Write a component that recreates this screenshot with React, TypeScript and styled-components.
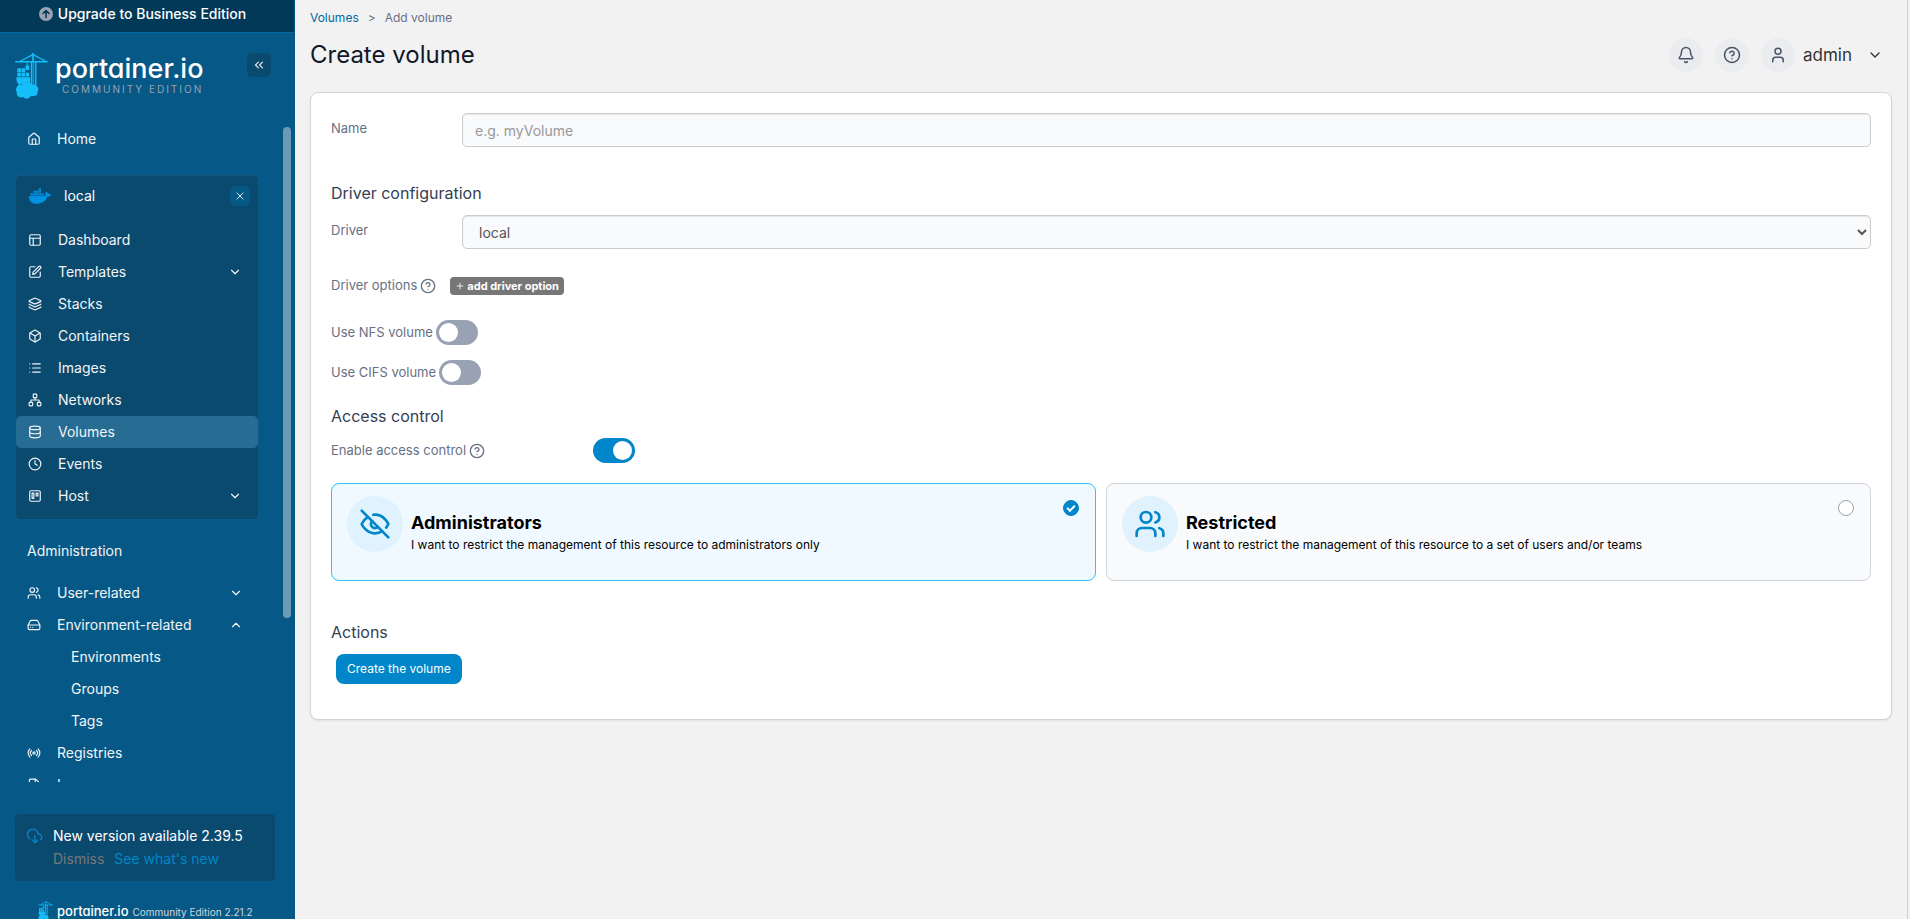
import React from 'react';
import styled, { createGlobalStyle } from 'styled-components';
import {
  Bell, Box, ChevronDown, ChevronsLeft, ChevronUp, CircleQuestionMark, Clock, Database,
  FileText, HardDrive, House, Layers, List, Network, PanelsTopLeft, Plus, Radio,
  SquarePen, User, Users, X,
} from 'lucide-react';
import { FaDocker } from 'react-icons/fa';

const GlobalStyle = createGlobalStyle`
  *, *::before, *::after { box-sizing: border-box; }
  body {
    margin: 0;
    background: #f2f2f2;
    font-family: Inter, "Liberation Sans", sans-serif;
    font-size: 14px;
    line-height: 20px;
    color: #344054;
  }
  a { text-decoration: none; color: inherit; }
  button, input, select { font-family: inherit; }
  h1, h2, h3, p, ul { margin: 0; padding: 0; }
  ul { list-style: none; }
`;

const Shell = styled.div`
  display: flex;
  height: 100vh;
  padding-right: 2px;
`;

/* ---------- Sidebar ---------- */

const Sidebar = styled.aside`
  flex: 0 0 295px;
  display: flex;
  flex-direction: column;
  height: 100vh;
  overflow: hidden;
  background: #065986;
  color: #f2f4f7;
`;

const UpgradeButton = styled.button`
  flex: 0 0 33px;
  display: flex;
  align-items: center;
  justify-content: center;
  gap: 5px;
  margin-right: 1px;
  padding: 0 9px 5px 0;
  border: 0;
  border-bottom: 1px solid #026aa2;
  background: #033958;
  color: #fff;
  font-size: 14px;
  font-weight: 500;
`;

const Brand = styled.div`
  flex: 0 0 90px;
  display: flex;
  align-items: flex-start;
  justify-content: space-between;
  padding: 20px 24px 0 15px;
`;

const Logo = styled.a`
  display: flex;
  align-items: flex-start;
  gap: 7px;
`;

const WordMark = styled.span<{ $size: number }>`
  display: block;
  color: #fff;
  font-size: ${(p) => p.$size}px;
  line-height: ${(p) => p.$size + 4}px;
  font-weight: 500;
  font-feature-settings: "cv11";
`;

const EditionMark = styled.span`
  display: block;
  padding-left: 7px;
  color: #98a2b3;
  font-size: 10px;
  line-height: 10px;
  letter-spacing: 2px;
  white-space: nowrap;
`;

const SquareButton = styled.button<{ $size: number; $bg: string }>`
  display: flex;
  align-items: center;
  justify-content: center;
  width: ${(p) => p.$size}px;
  height: ${(p) => p.$size}px;
  padding: 0;
  border: 0;
  border-radius: 5px;
  background: ${(p) => p.$bg};
  color: #e4e7ec;
`;

const MenuArea = styled.div`
  flex: 1 1 0;
  min-height: 0;
  display: flex;
  overflow: hidden;
`;

const Menu = styled.nav`
  flex: 1;
  padding-left: 16px;
  padding-right: 24px;
`;

const ScrollTrack = styled.div`
  flex: 0 0 8px;
  margin: 4px 4px 0 0;
`;

const ScrollThumb = styled.div`
  height: 75%;
  border-radius: 4px;
  background: #6a9bb6;
`;

const ItemLink = styled.a<{ $active?: boolean; $inset?: number }>`
  display: flex;
  align-items: center;
  height: 32px;
  padding: 0 16px 0 ${(p) => p.$inset ?? 12}px;
  border-radius: 5px;
  background: ${(p) => (p.$active ? '#276c93' : 'transparent')};
  color: #f2f4f7;
  font-size: 14px;

  > span { flex: 1; }
  > svg:first-child { flex: none; margin-right: 16px; }
`;

const EnvironmentBox = styled.section`
  margin: 20px 0 0;
  padding: 0 0 7px;
  border: 1px dotted #0e6c9f;
  border-width: 1px 1px 1px 0;
  border-radius: 5px;
  background: #0b4a6f;
`;

const EnvironmentHead = styled.div`
  display: flex;
  align-items: center;
  height: 48px;
  padding: 0 8px 8px 13px;
  gap: 13px;

  > span { flex: 1; color: #fff; }
`;

const MenuTitle = styled.h3`
  margin: 20px 0 15px;
  padding-left: 11px;
  font-size: 14px;
  line-height: 22px;
  font-weight: 400;
`;

const UpdateBox = styled.div`
  display: flex;
  gap: 10px;
  margin: 32px 20px 0 15px;
  padding: 11px 12px 11px 12px;
  border-radius: 4px;
  background: #0b4a6f;

  > svg { margin-top: 3px; }
`;

const UpdateText = styled.p`
  color: #fff;
  line-height: 22px;
`;

const UpdateActions = styled.div`
  display: flex;
  gap: 10px;
  line-height: 23px;
`;

const DismissButton = styled.button`
  padding: 0;
  border: 0;
  background: none;
  color: #777;
  font-size: 14px;
  line-height: 23px;
`;

const NewsLink = styled.a`
  color: #0086c9;
`;

const SideFooter = styled.footer`
  flex: 0 0 38px;
  display: flex;
  align-items: center;
  padding: 23px 0 0 38px;
  overflow: hidden;
  gap: 4px;
`;

const Version = styled.span`
  font-size: 10px;
  line-height: 16px;
  color: #d0d5dd;
  white-space: nowrap;
`;

/* ---------- Main ---------- */

const Main = styled.main`
  flex: 1;
  min-width: 0;
  padding: 10px 15px;
  border-right: 1px solid #d0d0d0;
  overflow: auto;
`;

const Breadcrumbs = styled.nav`
  display: flex;
  gap: 9px;
  font-size: 12px;
  line-height: 16px;
  color: #667085;

  a { color: #026aa2; }
`;

const PageHead = styled.header`
  display: flex;
  align-items: center;
  justify-content: space-between;
  height: 34px;
  margin: 12px 0 20px;
`;

const PageTitle = styled.h1`
  font-size: 24px;
  line-height: 32px;
  font-weight: 400;
  color: #101828;
`;

const HeadTools = styled.div`
  display: flex;
  align-items: center;
  gap: 12px;
  padding-right: 9px;
`;

const RoundButton = styled.button`
  display: flex;
  align-items: center;
  justify-content: center;
  width: 34px;
  height: 34px;
  padding: 0;
  border: 0;
  border-radius: 50%;
  background: #eaecf0;
  color: #475467;
`;

const UserButton = styled.button`
  display: flex;
  align-items: center;
  gap: 8px;
  padding: 0;
  border: 0;
  background: none;
  color: #333;
  font-size: 17px;

  > svg { margin-left: 7px; }
`;

const Avatar = styled.span`
  display: flex;
  align-items: center;
  justify-content: center;
  width: 34px;
  height: 34px;
  border-radius: 50%;
  background: #eaecf0;
  color: #475467;
`;

const Card = styled.form`
  padding: 20px 20px 35px;
  border: 1px solid #d0d5dd;
  border-radius: 8px;
  background: #fff;
  box-shadow: 0 1px 2px rgba(16, 24, 40, 0.08);
`;

const FieldRow = styled.div`
  display: flex;
  align-items: flex-start;
  height: 34px;
`;

const Label = styled.label<{ $width?: number }>`
  flex: none;
  width: ${(p) => (p.$width ? `${p.$width}px` : 'auto')};
  font-size: 13px;
  line-height: 16px;
  color: #667085;
`;

const FieldLabel = styled(Label)`
  padding-top: 7px;
`;

const fieldLook = `
  flex: 1;
  height: 34px;
  border: 1px solid #ccc;
  border-radius: 5px;
  background: #f9fafb;
  box-shadow: inset 0 1px 1px rgba(0, 0, 0, 0.08);
  font-size: 14px;
  color: #555;
`;

const TextInput = styled.input`
  ${fieldLook}
  padding: 0 12px;
  &::placeholder { color: #999; opacity: 1; }
`;

const Select = styled.select`
  ${fieldLook}
  padding: 0 0 0 12px;
`;

const SectionTitle = styled.h2<{ $top: number; $bottom: number }>`
  margin: ${(p) => p.$top}px 0 ${(p) => p.$bottom}px;
  font-size: 16px;
  line-height: 20px;
  font-weight: 400;
  color: #344054;
`;

const OptionRow = styled.div<{ $top: number }>`
  display: flex;
  align-items: center;
  gap: 3px;
  height: 25px;
  margin-top: ${(p) => p.$top}px;
  color: #667085;

  > label, > span { padding-bottom: 1px; }
  > svg { flex: none; }
`;

const BadgeButton = styled.button`
  display: flex;
  align-items: center;
  gap: 2px;
  height: 18px;
  margin-left: 11px;
  padding: 0 5px;
  border: 0;
  border-radius: 4px;
  background: #777;
  color: #fff;
  font-size: 11px;
  line-height: 16px;
  font-weight: 700;
`;

const Toggle = styled.input.attrs({ type: 'checkbox', role: 'switch' })`
  appearance: none;
  flex: none;
  display: flex;
  align-items: center;
  width: 42px;
  height: 25px;
  margin: 0;
  padding: 0 3px;
  border-radius: 13px;
  background: #98a2b3;

  &::before {
    content: "";
    width: 19px;
    height: 19px;
    border-radius: 50%;
    background: #fff;
  }
  &:checked { justify-content: flex-end; background: #0086c9; }
`;

const ToggleCell = styled.div`
  display: flex;
  margin-left: 105px;
`;

const Choices = styled.div`
  display: grid;
  grid-template-columns: 1fr 1fr;
  gap: 10px;
  margin-top: 20px;
`;

const Choice = styled.label<{ $selected?: boolean }>`
  display: flex;
  align-items: flex-start;
  height: 98px;
  padding: 12px 16px 12px 15px;
  border: 1px solid ${(p) => (p.$selected ? '#36bffa' : '#d0d5dd')};
  border-radius: 8px;
  background: ${(p) => (p.$selected ? '#f0f9ff' : '#f9fafb')};
`;

const ChoiceIcon = styled.span`
  flex: none;
  display: flex;
  align-items: center;
  justify-content: center;
  width: 56px;
  height: 56px;
  border-radius: 50%;
  background: #e0f2fe;
  color: #0086c9;
`;

const ChoiceText = styled.span`
  flex: 1;
  padding: 15px 0 0 8px;
  color: #000;

  strong { display: block; font-size: 18px; line-height: 24px; font-weight: 700; }
  span { display: block; font-size: 12px; line-height: 20px; }
`;

const ChoiceRadio = styled.input.attrs({ type: 'radio', name: 'access' })`
  appearance: none;
  flex: none;
  display: flex;
  align-items: center;
  justify-content: center;
  width: 16px;
  height: 16px;
  margin: 4px 0 0;
  border: 1px solid #98a2b3;
  border-radius: 50%;
  background: #fff;

  &:checked { border-color: #0086c9; background: #0086c9; }
  &:checked::before {
    content: "";
    width: 8px;
    height: 5px;
    margin-bottom: 2px;
    border: solid #fff;
    border-width: 0 0 2px 2px;
    transform: rotate(-45deg);
  }
`;

const SubmitButton = styled.button`
  height: 30px;
  margin-left: 5px;
  padding: 0 11px;
  border: 0;
  border-radius: 8px;
  background: #0086c9;
  color: #fff;
  font-size: 12px;
  line-height: 18px;
`;

/* ---------- Drawings ---------- */

function Crane({ width, height }: { width: number; height: number }) {
  return (
    <svg width={width} height={height} viewBox="15 24 98 139" fill="#13bef9" aria-hidden="true">
      <path d="M66 24h5v26h-5z" />
      <path d="M15 48h98v5H15z" />
      <path d="M68 29 30 49M69 29l38 20" stroke="#13bef9" strokeWidth="4" />
      <path d="M62 50h5v72h-5zM70 50h2v72h-2zM75 50h4v72h-4z" />
      <path d="M49 50h3v12h-3zM46 62h11v13H46z" />
      <path d="M21 70h11v12H21zM34 70h11v12H34zM21 84h11v11H21zM34 84h11v11H34zM47 84h10v11H47z" />
      <path d="M18 97h42v18q-10-4-18 2-8-2-14 4-10-6-10-24z" />
      <path d="M34 119q6-8 17-6 10-2 14 7 14-4 17 7 5 6 0 14 2 11-11 13-6 1-9-1-4 9-13 9-6 0-10-5-8 3-14-1-7-4-5-12-6-9 0-17 2-9 14-8z" />
    </svg>
  );
}

function KanbanIcon() {
  return (
    <svg width="14" height="14" viewBox="0 0 24 24" fill="none" stroke="currentColor" strokeWidth="2" strokeLinejoin="round">
      <rect x="3" y="3" width="18" height="18" rx="2" />
      <rect x="7" y="7" width="3" height="9" />
      <rect x="14" y="7" width="3" height="5" />
    </svg>
  );
}

function CloudDownIcon() {
  return (
    <svg width="16" height="16" viewBox="0 0 24 24" fill="none" stroke="#0086c9" strokeWidth="2" strokeLinecap="round" strokeLinejoin="round">
      <path d="m8 18 4 4 4-4M12 11v11" />
      <path d="M20.5 17.5A5 5 0 0 0 18 9h-1.3A8 8 0 1 0 4 16.2" />
    </svg>
  );
}

function UpgradeIcon() {
  return (
    <svg width="14" height="14" viewBox="0 0 14 14" fill="none">
      <circle cx="7" cy="7" r="7" fill="#98a2b3" />
      <path d="M7 10.5v-7M4 6.5l3-3 3 3" stroke="#033958" strokeWidth="1.6" strokeLinecap="round" strokeLinejoin="round" />
    </svg>
  );
}

function EyeOffIcon() {
  return (
    <svg width="32" height="32" viewBox="0 0 24 24" fill="none" stroke="currentColor" strokeWidth="2" strokeLinecap="round" strokeLinejoin="round">
      <path d="M9.88 9.88a3 3 0 1 0 4.24 4.24" />
      <path d="M10.73 5.08A10.43 10.43 0 0 1 12 5c7 0 10 7 10 7a13.16 13.16 0 0 1-1.67 2.68" />
      <path d="M6.61 6.61A13.53 13.53 0 0 0 2 12s3 7 10 7a9.74 9.74 0 0 0 5.39-1.61" />
      <path d="m2 2 20 20" />
    </svg>
  );
}

/* ---------- Page ---------- */

type Entry = { label: string; icon: React.ReactNode; more?: boolean; active?: boolean };

const environmentEntries: Entry[] = [
  { label: 'Dashboard', icon: <PanelsTopLeft size={14} /> },
  { label: 'Templates', icon: <SquarePen size={14} />, more: true },
  { label: 'Stacks', icon: <Layers size={14} /> },
  { label: 'Containers', icon: <Box size={14} /> },
  { label: 'Images', icon: <List size={14} /> },
  { label: 'Networks', icon: <Network size={14} /> },
  { label: 'Volumes', icon: <Database size={14} />, active: true },
  { label: 'Events', icon: <Clock size={14} /> },
  { label: 'Host', icon: <KanbanIcon />, more: true },
];

export default function App() {
  return (
    <Shell>
      <GlobalStyle />
      <Sidebar>
        <UpgradeButton type="button"><UpgradeIcon />Upgrade to Business Edition</UpgradeButton>
        <Brand>
          <Logo href="#">
            <Crane width={33} height={46} />
            <span>
              <WordMark $size={27}>portainer.io</WordMark>
              <EditionMark>COMMUNITY EDITION</EditionMark>
            </span>
          </Logo>
          <SquareButton type="button" $size={24} $bg="#0b4a6f" aria-label="Collapse sidebar">
            <ChevronsLeft size={14} />
          </SquareButton>
        </Brand>
        <MenuArea>
          <Menu>
            <ItemLink href="#" $inset={11}><House size={14} /><span>Home</span></ItemLink>
            <EnvironmentBox>
              <EnvironmentHead>
                <FaDocker size={22} color="#0091e2" />
                <span>local</span>
                <SquareButton type="button" $size={20} $bg="#065986" aria-label="Close environment">
                  <X size={12} />
                </SquareButton>
              </EnvironmentHead>
              <ul>
                {environmentEntries.map((e) => (
                  <li key={e.label}>
                    <ItemLink href="#" $active={e.active}>
                      {e.icon}
                      <span>{e.label}</span>
                      {e.more && <ChevronDown size={14} />}
                    </ItemLink>
                  </li>
                ))}
              </ul>
            </EnvironmentBox>
            <MenuTitle>Administration</MenuTitle>
            <ul>
              <li><ItemLink href="#" $inset={11}><Users size={14} /><span>User-related</span><ChevronDown size={14} /></ItemLink></li>
              <li><ItemLink href="#" $inset={11}><HardDrive size={14} /><span>Environment-related</span><ChevronUp size={14} /></ItemLink></li>
              <li><ItemLink href="#" $inset={55}><span>Environments</span></ItemLink></li>
              <li><ItemLink href="#" $inset={55}><span>Groups</span></ItemLink></li>
              <li><ItemLink href="#" $inset={55}><span>Tags</span></ItemLink></li>
              <li><ItemLink href="#" $inset={11}><Radio size={14} /><span>Registries</span></ItemLink></li>
              <li><ItemLink href="#" $inset={11}><FileText size={14} /><span>Logs</span></ItemLink></li>
            </ul>
          </Menu>
          <ScrollTrack><ScrollThumb /></ScrollTrack>
        </MenuArea>
        <UpdateBox>
          <CloudDownIcon />
          <div>
            <UpdateText>New version available 2.39.5</UpdateText>
            <UpdateActions>
              <DismissButton type="button">Dismiss</DismissButton>
              <NewsLink href="#">See what's new</NewsLink>
            </UpdateActions>
          </div>
        </UpdateBox>
        <SideFooter>
          <Crane width={15} height={21} />
          <WordMark $size={13}>portainer.io</WordMark>
          <Version>Community Edition 2.21.2</Version>
        </SideFooter>
      </Sidebar>

      <Main>
        <Breadcrumbs aria-label="Breadcrumb">
          <a href="#">Volumes</a>
          <span>&gt;</span>
          <span>Add volume</span>
        </Breadcrumbs>
        <PageHead>
          <PageTitle>Create volume</PageTitle>
          <HeadTools>
            <RoundButton type="button" aria-label="Notifications"><Bell size={18} /></RoundButton>
            <RoundButton type="button" aria-label="Help"><CircleQuestionMark size={18} /></RoundButton>
            <UserButton type="button">
              <Avatar><User size={18} /></Avatar>
              admin
              <ChevronDown size={16} />
            </UserButton>
          </HeadTools>
        </PageHead>

        <Card>
          <FieldRow>
            <FieldLabel htmlFor="name" $width={131}>Name</FieldLabel>
            <TextInput id="name" placeholder="e.g. myVolume" />
          </FieldRow>

          <SectionTitle $top={36} $bottom={12}>Driver configuration</SectionTitle>
          <FieldRow>
            <FieldLabel htmlFor="driver" $width={131}>Driver</FieldLabel>
            <Select id="driver" defaultValue="local"><option value="local">local</option></Select>
          </FieldRow>

          <OptionRow $top={24}>
            <Label as="span">Driver options</Label>
            <CircleQuestionMark size={16} />
            <BadgeButton type="button"><Plus size={10} strokeWidth={2} />add driver option</BadgeButton>
          </OptionRow>
          <OptionRow $top={22}>
            <Label htmlFor="nfs">Use NFS volume</Label>
            <Toggle id="nfs" />
          </OptionRow>
          <OptionRow $top={15}>
            <Label htmlFor="cifs">Use CIFS volume</Label>
            <Toggle id="cifs" />
          </OptionRow>

          <SectionTitle $top={21} $bottom={12}>Access control</SectionTitle>
          <OptionRow $top={0}>
            <Label htmlFor="access-control">Enable access control</Label>
            <CircleQuestionMark size={16} />
            <ToggleCell><Toggle id="access-control" defaultChecked /></ToggleCell>
          </OptionRow>

          <Choices>
            <Choice $selected>
              <ChoiceIcon><EyeOffIcon /></ChoiceIcon>
              <ChoiceText>
                <strong>Administrators</strong>
                <span>I want to restrict the management of this resource to administrators only</span>
              </ChoiceText>
              <ChoiceRadio defaultChecked />
            </Choice>
            <Choice>
              <ChoiceIcon><Users size={32} /></ChoiceIcon>
              <ChoiceText>
                <strong>Restricted</strong>
                <span>I want to restrict the management of this resource to a set of users and/or teams</span>
              </ChoiceText>
              <ChoiceRadio />
            </Choice>
          </Choices>

          <SectionTitle $top={41} $bottom={12}>Actions</SectionTitle>
          <SubmitButton type="button">Create the volume</SubmitButton>
        </Card>
      </Main>
    </Shell>
  );
}
